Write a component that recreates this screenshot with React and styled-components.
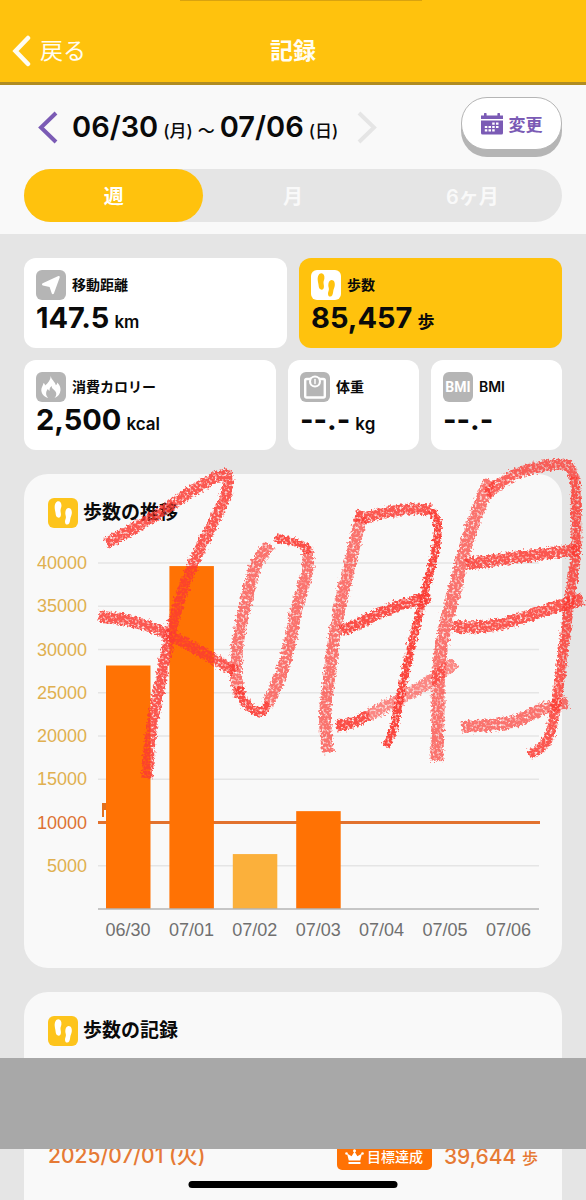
import React from 'react';
import styled, { createGlobalStyle } from 'styled-components';

const GlobalStyle = createGlobalStyle`
  *, *::before, *::after {
    box-sizing: border-box;
  }
  body {
    margin: 0;
    background: #e5e5e5;
    color: #0a0a0a;
    font-family: Inter, 'Noto Sans CJK JP', sans-serif;
  }
  button {
    font-family: inherit;
    border: 0;
    padding: 0;
    background: none;
    cursor: pointer;
  }
  h1, h2, h3, p, ul {
    margin: 0;
    padding: 0;
  }
  svg {
    display: block;
    flex: none;
  }
`;

const Page = styled.div`
  position: relative;
  display: flex;
  flex-direction: column;
  height: 100vh;
  min-height: 1200px;
  overflow: hidden;
`;

const Island = styled.div`
  position: absolute;
  top: 0;
  left: 50%;
  width: 242px;
  height: 1px;
  margin-left: -113px;
  background: #d9a30f;
`;

const Header = styled.header`
  display: grid;
  flex: none;
  grid-template-columns: 1fr auto 1fr;
  align-items: center;
  height: 85px;
  padding: 20px 12px 0;
  background: #ffc20d;
  border-bottom: 3px solid #b08c22;
  color: #fffdf3;
`;

const BackButton = styled.button`
  display: flex;
  align-items: center;
  gap: 8px;
  color: inherit;
  font-size: 23px;
  line-height: 32px;
`;

const Title = styled.h1`
  font-size: 23px;
  font-weight: 700;
  line-height: 32px;
`;

const RangePanel = styled.section`
  display: flex;
  flex: none;
  flex-direction: column;
  gap: 12px;
  padding: 12px 24px;
  background: #f9f9f9;
`;

const RangeRow = styled.div`
  display: flex;
  align-items: center;
  justify-content: space-between;
`;

const RangeNav = styled.div`
  display: flex;
  align-items: center;
  gap: 14px;
  padding-left: 14px;
`;

const ArrowButton = styled.button`
  color: ${(props) => (props.disabled ? '#e5e5e5' : '#7b5bb5')};
`;

const RangeText = styled.p`
  display: flex;
  align-items: baseline;
  gap: 5px;
  height: 36px;
  padding-right: 5px;
  font-size: 29px;
  font-weight: 600;
  line-height: 36px;
  white-space: nowrap;

  small {
    font-size: 17px;
    font-weight: 500;
    line-height: 24px;
  }
`;

const ChangeButton = styled.button`
  display: flex;
  align-items: center;
  justify-content: center;
  gap: 6px;
  width: 101px;
  height: 53px;
  margin-bottom: 7px;
  border: 1px solid #b5b5b5;
  border-radius: 26px;
  background: #fff;
  box-shadow: 0 7px 0 #b5b5b5;
  color: #7b5bb5;
  font-size: 17px;
  font-weight: 700;
`;

const Segments = styled.div`
  display: grid;
  grid-template-columns: repeat(3, 1fr);
  height: 53px;
  border-radius: 27px;
  background: #e5e5e5;
`;

const Segment = styled.button`
  border-radius: 27px;
  background: ${(props) => (props.$active ? '#ffc20d' : 'transparent')};
  color: ${(props) => (props.$active ? '#fff' : '#f9f9f9')};
  font-size: 20px;
  font-weight: 600;
`;

const Main = styled.main`
  display: flex;
  flex: 1;
  flex-direction: column;
  gap: 24px;
  padding: 24px 24px 0;
`;

const Stats = styled.div`
  display: flex;
  flex-direction: column;
  gap: 12px;
`;

const StatRow = styled.div`
  display: grid;
  grid-template-columns: ${(props) => props.$columns};
  gap: 12px;
`;

const StatCard = styled.button`
  padding: 12px;
  border-radius: 12px;
  background: ${(props) => (props.$active ? '#ffc20d' : '#fff')};
  color: inherit;
  text-align: left;
`;

const StatHead = styled.span`
  display: flex;
  align-items: center;
  gap: 6px;
  height: 30px;
  font-size: 14px;
  font-weight: 600;
  line-height: 30px;
`;

const StatValue = styled.span`
  display: flex;
  align-items: baseline;
  gap: 5px;
  height: 36px;
  font-size: 29px;
  font-weight: 700;
  line-height: 36px;
  white-space: nowrap;

  small {
    font-size: 17px;
    font-weight: 600;
    line-height: 24px;
  }
`;

const IconBox = styled.span`
  display: flex;
  flex: none;
  align-items: center;
  justify-content: center;
  width: 30px;
  height: 30px;
  border-radius: 6px;
  background: ${(props) => props.$bg || '#b5b5b5'};
  color: ${(props) => props.$color || '#fff'};
`;

const BmiMark = styled.span`
  font-family: Roboto, 'Liberation Sans', sans-serif;
  font-size: 14px;
  font-weight: 700;
`;

const Card = styled.section`
  position: relative;
  flex: ${(props) => (props.$grow ? '1' : 'none')};
  padding: 24px;
  border-radius: ${(props) => (props.$grow ? '24px 24px 0 0' : '24px')};
  background: #f9f9f9;
`;

const CardTitle = styled.h2`
  display: flex;
  align-items: center;
  gap: 5px;
  height: 30px;
  font-size: 19px;
  font-weight: 600;
  line-height: 30px;
`;

const ChartArea = styled.div`
  margin: 0 -24px;

  svg {
    width: 100%;
    height: auto;
    font-family: 'Liberation Sans', sans-serif;
    font-size: 18px;
  }
`;

const Crayon = styled.svg`
  position: absolute;
  z-index: 1;
  top: 0;
  left: 0;
  width: 100%;
  height: 100%;
  overflow: visible;
  pointer-events: none;
`;

const RecordList = styled.ul`
  padding-top: 94px;
  list-style: none;
`;

const RecordItem = styled.li`
  display: flex;
  align-items: center;
  gap: 12px;
  height: 32px;
  color: #e67a35;
  font-size: 21px;
  font-weight: 500;
`;

const RecordDate = styled.span`
  flex: 1;
  line-height: 32px;
`;

const Badge = styled.span`
  display: flex;
  align-items: center;
  gap: 3px;
  height: 28px;
  padding: 0 9px 0 8px;
  border-radius: 5px;
  background: #ff7204;
  color: #fff;
  font-size: 14px;
`;

const RecordSteps = styled.span`
  small {
    font-size: 16px;
  }
`;

const Cover = styled.div`
  position: absolute;
  z-index: 2;
  top: 1058px;
  left: 0;
  right: 0;
  height: 91px;
  background: #a8a8a8;
`;

const HomeIndicator = styled.div`
  position: absolute;
  z-index: 2;
  bottom: 12px;
  left: 50%;
  width: 209px;
  height: 7px;
  border-radius: 4px;
  background: #000;
  transform: translateX(-50%);
`;

const Chevron = ({ flip }) => (
  <svg width="20" height="33" viewBox="0 0 20 33" fill="none" stroke="currentColor" strokeWidth="4" aria-hidden="true">
    <path d={flip ? 'M2 2L17 16.500L2 31' : 'M18 2L3 16.500L18 31'} />
  </svg>
);

const BackIcon = () => (
  <svg width="20" height="32" viewBox="0 0 20 32" fill="none" stroke="currentColor" strokeWidth="4.500" strokeLinecap="round" strokeLinejoin="miter" aria-hidden="true">
    <path d="M16 3L3.500 16L16 29" />
  </svg>
);

const CalendarIcon = () => (
  <svg width="22" height="22" viewBox="0 0 22 22" fill="currentColor" aria-hidden="true">
    <path d="M0 2.500h3V1a1 1 0 0 1 2.600 0v1.500h10.800V1A1 1 0 0 1 19 1v1.500h3v3.500H0z" />
    <path d="M0 7.500h22V20a1.500 1.500 0 0 1-1.500 1.500h-19A1.500 1.500 0 0 1 0 20z" />
    <g fill="#fff">
      <path d="M11.200 9.500h2.500v2.200h-2.500zM15 9.500h2.500v2.200H15zM3.800 12.900h2.500v2.200H3.800zM7.500 12.900H10v2.200H7.500zM11.200 12.900h2.500v2.200h-2.500zM15 12.900h2.500v2.200H15zM3.800 16.300h2.500v2.200H3.800zM7.500 16.300H10v2.200H7.500zM11.200 16.300h2.500v2.200h-2.500z" />
    </g>
  </svg>
);

const ArrowIcon = () => (
  <svg width="30" height="30" viewBox="0 0 30 30" fill="currentColor" aria-hidden="true">
    <path d="M22.300 6.100c.9-.4 1.700.4 1.400 1.300l-5.800 16c-.4 1-1.800 1-2.100 0L13.600 17l-6.800-1.600c-1.100-.3-1.100-1.700-.1-2.100z" />
  </svg>
);

const FeetIcon = () => (
  <svg width="30" height="30" viewBox="0 0 30 30" fill="currentColor" aria-hidden="true">
    <path d="M10.300 3.300c2.300 0 3.400 2.300 3.100 5-.2 1.800-.9 2.700-.9 4.200 0 1.700.6 2.700.4 4.500-.2 1.700-1 2.700-2.200 2.700-2 0-3-1.900-3.100-4.100-.1-1.800-.8-3.500-.9-5.800-.2-3.600 1.300-6.500 3.600-6.500z" />
    <path d="M20.700 10c2.400.1 3.600 2.800 3 6-.4 2.200-1.300 3.500-1.500 5.400-.3 2.900-1.200 5.300-3.100 5.200-1.500-.1-2.100-1.500-2.100-3.200 0-1.600.8-2.500.9-4 .1-1.700-.7-2.600-.6-4.500.1-2.700 1.200-5 3.400-4.900z" />
  </svg>
);

const FlameIcon = () => (
  <svg width="30" height="30" viewBox="0 0 30 30" fill="currentColor" aria-hidden="true">
    <path d="M14.800 4c.3 3.500 4.300 5.700 5.100 9.300.9-.5 1.300-1.500 1.300-2.700 2.300 2.200 3.500 4.800 3.300 7.700-.2 3.700-2.500 6.300-6 7.600 1.500-1.500 2.100-3.300 1.600-5.100-.5-2-2.300-3.200-3.400-4.100-.8-.8-1-1.700-.9-2.700-1.900 1-2.400 3-2.200 4.700-.9-.2-1.400-.8-1.700-1.600-1.800 2-2.900 5.700.2 8.800-4-1.200-6.700-4.200-6.800-7.700C5.100 15.700 7 13.800 7.500 11c1 .6 1.500 1.500 1.500 2.600C11.800 11.400 14.500 8.300 14.800 4z" />
  </svg>
);

const ScaleIcon = () => (
  <svg width="30" height="30" viewBox="0 0 30 30" fill="none" aria-hidden="true">
    <rect x="5.200" y="7" width="19.600" height="18.500" rx="1.500" stroke="currentColor" strokeWidth="2.400" />
    <circle cx="15" cy="9.500" r="6" fill="currentColor" />
    <circle cx="15" cy="9.500" r="3.900" fill="#b5b5b5" />
    <path d="M15 7.500v4" stroke="currentColor" strokeWidth="1.500" strokeLinecap="round" />
  </svg>
);

const CrownIcon = () => (
  <svg width="19" height="17" viewBox="0 0 19 17" fill="currentColor" aria-hidden="true">
    <path d="M9.500 3.500L12.400 8.200L17 5.500L15.200 12.500H3.800L2 5.500L6.600 8.200z" />
    <circle cx="9.500" cy="2.800" r="1.500" />
    <circle cx="1.500" cy="5.500" r="1.300" />
    <circle cx="17.500" cy="5.500" r="1.300" />
    <path d="M3.500 14h12v2h-12z" />
  </svg>
);

const STEPS = [
  { day: '06/30', steps: 28150 },
  { day: '07/01', steps: 39644 },
  { day: '07/02', steps: 6350 },
  { day: '07/03', steps: 11313 },
  { day: '07/04', steps: 0 },
  { day: '07/05', steps: 0 },
  { day: '07/06', steps: 0 },
];
const TICKS = [5000, 10000, 15000, 20000, 25000, 30000, 35000, 40000];
const GOAL = 10000;
const BASE = 381;
const yOf = (steps) => BASE - (steps * 346) / 40000;

const StepChart = () => (
  <svg viewBox="0 0 538 416" role="img" aria-label="歩数の推移">
    {TICKS.map((tick) => (
      <g key={tick}>
        {tick !== GOAL && <path d={`M74 ${yOf(tick)}H515`} stroke="#e5e5e5" strokeWidth="1.300" />}
        <text x="63" y={yOf(tick) + 6} textAnchor="end" fill={tick === GOAL ? '#dd7233' : '#e0b050'}>
          {tick}
        </text>
      </g>
    ))}
    <path d="M78 289V275H90V282H80V289z" fill="#e2711f" />
    <path d={`M74 ${yOf(GOAL)}H516`} stroke="#e2722e" strokeWidth="3" />
    {STEPS.map(({ day, steps }, i) => (
      <g key={day}>
        <rect x={82 + i * 63.4} y={yOf(steps)} width="44.500" height={BASE - yOf(steps)} fill={steps >= GOAL ? '#ff7204' : '#fbb03b'} />
        <text x={104 + i * 63.4} y="408" textAnchor="middle" fill="#707070">
          {day}
        </text>
      </g>
    ))}
    <path d={`M74 ${BASE}H515`} stroke="#b5b5b5" strokeWidth="1.500" />
  </svg>
);

// width, opacity and the points that each stroke runs through
const STROKES = [
  [11, 0.85, [[106, 541], [140, 523], [173, 502], [200, 484], [221, 473], [228, 477], [223, 500], [200, 547], [184, 585], [172, 625], [158, 692], [151, 730], [147, 776]]],
  [11, 0.85, [[99, 614], [120, 617], [145, 623], [170, 633], [207, 653], [236, 670]]],
  [12, 0.7, [[270, 543], [256, 563], [246, 600], [238, 640], [236, 672], [240, 694]]],
  [8, 0.9, [[275, 536], [290, 539], [306, 545], [309, 551]]],
  [12, 0.7, [[308, 549], [307, 570], [297, 605], [290, 640], [281, 672], [268, 702]]],
  [9, 0.9, [[238, 685], [243, 698], [252, 707], [261, 710], [269, 702]]],
  [12, 0.7, [[361, 515], [352, 553], [342, 595], [335, 630], [329, 677], [325, 715], [328, 751]]],
  [11, 0.85, [[356, 513], [366, 515], [383, 511], [410, 507], [432, 508]]],
  [8, 0.95, [[432, 508], [438, 522], [435, 550], [424, 593], [411, 645], [399, 700], [393, 728], [386, 744]]],
  [11, 0.9, [[341, 629], [360, 621], [380, 611], [403, 602], [430, 595]]],
  [11, 0.9, [[336, 724], [352, 721], [369, 713]]],
  [12, 0.6, [[369, 713], [398, 698], [429, 680], [455, 660]]],
  [13, 0.7, [[490, 478], [476, 513], [464, 550], [455, 587], [445, 625], [439, 665], [438, 710], [437, 759]]],
  [11, 0.8, [[487, 492], [498, 483], [516, 472], [543, 464], [567, 463], [575, 477]]],
  [10, 0.85, [[575, 475], [576, 510], [576, 550], [570, 595], [563, 650], [558, 690], [551, 728], [543, 744], [529, 753]]],
  [12, 0.85, [[466, 562], [490, 559], [519, 555], [550, 551], [580, 548]]],
  [12, 0.85, [[453, 625], [478, 625], [505, 621], [546, 608], [583, 597]]],
  [12, 0.7, [[462, 725], [490, 723], [516, 719], [545, 706], [568, 701]]],
];

// catmull-rom spline written as cubic beziers
const toPath = (pts) =>
  pts.slice(1).reduce((d, p, i) => {
    const prev = pts[i - 1] || pts[i];
    const from = pts[i];
    const next = pts[i + 2] || p;
    const c1 = [from[0] + (p[0] - prev[0]) / 6, from[1] + (p[1] - prev[1]) / 6];
    const c2 = [p[0] - (next[0] - from[0]) / 6, p[1] - (next[1] - from[1]) / 6];
    return `${d} C${c1} ${c2} ${p}`;
  }, `M${pts[0]}`);

const Handwriting = () => (
  <Crayon viewBox="24 472 538 494" aria-hidden="true">
    <defs>
      <filter id="crayon" filterUnits="userSpaceOnUse" x="80" y="440" width="520" height="350" colorInterpolationFilters="sRGB">
        <feTurbulence type="fractalNoise" baseFrequency="0.4" numOctaves="2" seed="4" result="noise" />
        <feDisplacementMap in="SourceGraphic" in2="noise" scale="7" xChannelSelector="R" yChannelSelector="G" result="rough" />
        <feColorMatrix in="noise" type="matrix" values="0 0 0 0 0  0 0 0 0 0  0 0 0 0 0  0 0 3 0 -0.5" result="grain" />
        <feComposite in="rough" in2="grain" operator="in" />
      </filter>
    </defs>
    <g filter="url(#crayon)" fill="none" stroke="#fb3b33" strokeLinejoin="round">
      {STROKES.map(([width, opacity, pts]) => (
        <path key={toPath(pts)} d={toPath(pts)} strokeWidth={width} opacity={opacity} />
      ))}
    </g>
  </Crayon>
);

const Stat = ({ icon, label, value, unit, active }) => (
  <StatCard type="button" $active={active}>
    <StatHead>
      <IconBox $bg={active && '#fff'} $color={active && '#ffc20d'}>{icon}</IconBox>
      {label}
    </StatHead>
    <StatValue>
      {value}
      {unit && <small>{unit}</small>}
    </StatValue>
  </StatCard>
);

export default function App() {
  return (
    <>
      <GlobalStyle />
      <Page>
        <Header>
          <BackButton type="button">
            <BackIcon />
            戻る
          </BackButton>
          <Title>記録</Title>
        </Header>
        <Island />
        <RangePanel>
          <RangeRow>
            <RangeNav>
              <ArrowButton type="button" aria-label="前の週">
                <Chevron />
              </ArrowButton>
              <RangeText>
                06/30
                <small>(月)</small>
                <small>～</small>
                07/06
                <small>(日)</small>
              </RangeText>
              <ArrowButton type="button" aria-label="次の週" disabled>
                <Chevron flip />
              </ArrowButton>
            </RangeNav>
            <ChangeButton type="button">
              <CalendarIcon />
              変更
            </ChangeButton>
          </RangeRow>
          <Segments>
            <Segment type="button" $active>週</Segment>
            <Segment type="button">月</Segment>
            <Segment type="button">6ヶ月</Segment>
          </Segments>
        </RangePanel>
        <Main>
          <Stats>
            <StatRow $columns="1fr 1fr">
              <Stat icon={<ArrowIcon />} label="移動距離" value="147.5" unit="km" />
              <Stat icon={<FeetIcon />} label="歩数" value="85,457" unit="歩" active />
            </StatRow>
            <StatRow $columns="25fr 13fr 13fr">
              <Stat icon={<FlameIcon />} label="消費カロリー" value="2,500" unit="kcal" />
              <Stat icon={<ScaleIcon />} label="体重" value="--.-" unit="kg" />
              <Stat icon={<BmiMark>BMI</BmiMark>} label="BMI" value="--.-" />
            </StatRow>
          </Stats>
          <Card>
            <CardTitle>
              <IconBox $bg="#fdc41c"><FeetIcon /></IconBox>
              歩数の推移
            </CardTitle>
            <ChartArea>
              <StepChart />
            </ChartArea>
            <Handwriting />
          </Card>
          <Card $grow>
            <CardTitle>
              <IconBox $bg="#fdc41c"><FeetIcon /></IconBox>
              歩数の記録
            </CardTitle>
            <RecordList>
              <RecordItem>
                <RecordDate>2025/07/01 (火)</RecordDate>
                <Badge>
                  <CrownIcon />
                  目標達成
                </Badge>
                <RecordSteps>
                  39,644 <small>歩</small>
                </RecordSteps>
              </RecordItem>
            </RecordList>
          </Card>
        </Main>
        <Cover />
        <HomeIndicator />
      </Page>
    </>
  );
}
